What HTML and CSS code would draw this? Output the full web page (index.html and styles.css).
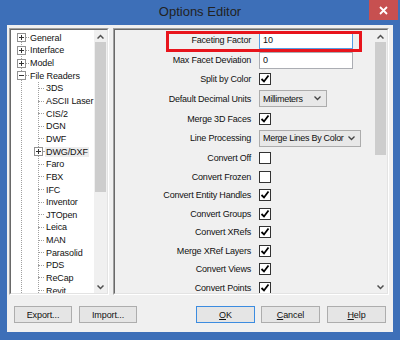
FILE: index.html
```html
<!DOCTYPE html>
<html>
<head>
<title>Options Editor</title>
<link rel="stylesheet" href="styles.css">
</head>
<body>

<div class="window">
	<div class="titlebar">
		<span class="title">Options Editor</span>
		<button class="close"><svg width="9" height="9" viewBox="0 0 9 9"><path d="M1 1 L8 8 M8 1 L1 8" stroke="#fff" stroke-width="1.8"/></svg></button>
	</div>

	<div class="client">
		<div class="panes">

			<div class="tree">
				<div class="tree-view">
					<ul class="nodes">
						<li><span class="box plus"></span><span class="dash"></span>General</li>
						<li><span class="box plus"></span><span class="dash"></span>Interface</li>
						<li><span class="box plus"></span><span class="dash"></span>Model</li>
						<li><span class="box minus"></span><span class="dash"></span>File Readers</li>
						<li class="children">
							<ul>
								<li><span class="dash long"></span>3DS</li>
								<li><span class="dash long"></span>ASCII Laser</li>
								<li><span class="dash long"></span>CIS/2</li>
								<li><span class="dash long"></span>DGN</li>
								<li><span class="dash long"></span>DWF</li>
								<li><span class="box plus inner"></span><span class="dash short"></span><span class="hot">DWG/DXF</span></li>
								<li><span class="dash long"></span>Faro</li>
								<li><span class="dash long"></span>FBX</li>
								<li><span class="dash long"></span>IFC</li>
								<li><span class="dash long"></span>Inventor</li>
								<li><span class="dash long"></span>JTOpen</li>
								<li><span class="dash long"></span>Leica</li>
								<li><span class="dash long"></span>MAN</li>
								<li><span class="dash long"></span>Parasolid</li>
								<li><span class="dash long"></span>PDS</li>
								<li><span class="dash long"></span>ReCap</li>
								<li><span class="dash long"></span>Revit</li>
							</ul>
						</li>
					</ul>
					<div class="vscroll">
						<div class="arrow"><svg width="7" height="5" viewBox="0 0 7 5"><polyline points="0.5,4.5 3.5,1.5 6.5,4.5" fill="none" stroke="#505050" stroke-width="1.5"/></svg></div>
						<div class="track"><div class="thumb tree-thumb"></div></div>
						<div class="arrow"><svg width="7" height="5" viewBox="0 0 7 5"><polyline points="0.5,0.5 3.5,3.5 6.5,0.5" fill="none" stroke="#505050" stroke-width="1.5"/></svg></div>
					</div>
				</div>
			</div>

			<div class="editor">
				<div class="editor-view">
					<div class="grid">
						<div class="row r-first">
							<label>Faceting Factor</label>
							<input class="text focus" type="text" value="10">
						</div>
						<div class="row r-input">
							<label>Max Facet Deviation</label>
							<input class="text" type="text" value="0">
						</div>
						<div class="row">
							<label>Split by Color</label>
							<span class="check on"></span>
						</div>
						<div class="row r-select">
							<label>Default Decimal Units</label>
							<span class="select units">Millimeters</span>
						</div>
						<div class="row r-short">
							<label>Merge 3D Faces</label>
							<span class="check on"></span>
						</div>
						<div class="row r-select">
							<label>Line Processing</label>
							<span class="select lines">Merge Lines By Color</span>
						</div>
						<div class="row">
							<label>Convert Off</label>
							<span class="check"></span>
						</div>
						<div class="row">
							<label>Convert Frozen</label>
							<span class="check"></span>
						</div>
						<div class="row">
							<label>Convert Entity Handles</label>
							<span class="check on"></span>
						</div>
						<div class="row">
							<label>Convert Groups</label>
							<span class="check on"></span>
						</div>
						<div class="row">
							<label>Convert XRefs</label>
							<span class="check on"></span>
						</div>
						<div class="row">
							<label>Merge XRef Layers</label>
							<span class="check on"></span>
						</div>
						<div class="row">
							<label>Convert Views</label>
							<span class="check on"></span>
						</div>
						<div class="row">
							<label>Convert Points</label>
							<span class="check on"></span>
						</div>
					</div>
					<div class="vscroll">
						<div class="arrow"><svg width="7" height="5" viewBox="0 0 7 5"><polyline points="0.5,4.5 3.5,1.5 6.5,4.5" fill="none" stroke="#505050" stroke-width="1.5"/></svg></div>
						<div class="track"><div class="thumb grid-thumb"></div></div>
						<div class="arrow"><svg width="7" height="5" viewBox="0 0 7 5"><polyline points="0.5,0.5 3.5,3.5 6.5,0.5" fill="none" stroke="#505050" stroke-width="1.5"/></svg></div>
					</div>
				</div>
				<div class="marker"></div>
			</div>

		</div>

		<div class="buttons">
			<button>Export...</button>
			<button>Import...</button>
			<button class="default push"><u>O</u>K</button>
			<button class="wide"><u>C</u>ancel</button>
			<button class="wide"><u>H</u>elp</button>
		</div>
	</div>
</div>

</body>
</html>
```

FILE: styles.css
```css
body {
	margin: 0;
	width: 400px;
	height: 340px;
	overflow: hidden;
	background-color: #3d6fb8;
	font-family: 'Liberation Sans', Arial, sans-serif;
	font-size: 9px;
	letter-spacing: -0.2px;
	color: #111;
}

ul {
	list-style: none;
	margin: 0;
	padding: 0;
}

.window {
	display: flex;
	flex-direction: column;
	height: 340px;
}

/* title bar */

.titlebar {
	display: grid;
	grid-template-columns: 1fr auto 1fr;
	height: 25px;
}

.title {
	grid-column: 2;
	font-size: 13px;
	letter-spacing: 0;
	line-height: 24px;
	color: #222;
}

.close {
	grid-column: 3;
	justify-self: end;
	display: flex;
	align-items: center;
	justify-content: center;
	width: 29px;
	height: 20px;
	margin-right: 2px;
	padding: 0;
	border: none;
	background-color: #c75050;
}

/* client area */

.client {
	display: flex;
	flex-direction: column;
	flex: 1;
	margin: 0 7px 8px;
	padding: 3px 4px 0 2px;
	background-color: #f0f0f0;
}

.panes {
	display: flex;
	gap: 4px;
	height: 267px;
}

.tree, .editor {
	box-sizing: border-box;
	border: 1px solid;
	border-color: #a0a0a0 #fff #fff #a0a0a0;
}

.tree-view, .editor-view {
	display: flex;
	height: 100%;
	box-sizing: border-box;
	border: 1px solid;
	border-color: #696969 #e3e3e3 #e3e3e3 #696969;
	overflow: hidden;
}

/* tree */

.tree {
	width: 100px;
}

.tree-view {
	background-color: #fff;
}

.nodes {
	flex: 1;
	padding-top: 1.5px;
	letter-spacing: -0.1px;
	background-image: repeating-linear-gradient(to bottom, #a0a0a0 0 1px, transparent 1px 2px);
	background-size: 1px 100%;
	background-position: 10px 6px;
	background-repeat: no-repeat;
}

.nodes li {
	display: flex;
	align-items: center;
	height: 12.65px;
	white-space: nowrap;
}

.nodes li.children {
	display: block;
	height: auto;
}

.children ul {
	background-image: repeating-linear-gradient(to bottom, #a0a0a0 0 1px, transparent 1px 2px);
	background-size: 1px 100%;
	background-position: 27px 0;
	background-repeat: no-repeat;
}

.box {
	box-sizing: border-box;
	width: 9px;
	height: 9px;
	margin-left: 6px;
	border: 1px solid #919191;
	background-color: #fff;
	background-repeat: no-repeat;
	background-position: center;
}

.box.plus {
	background-image: linear-gradient(#333, #333), linear-gradient(#333, #333);
	background-size: 5px 1px, 1px 5px;
}

.box.minus {
	background-image: linear-gradient(#333, #333);
	background-size: 5px 1px;
}

.box.inner {
	margin-left: 23px;
}

.dash {
	width: 3px;
	margin-right: 1px;
	border-top: 1px dotted #a0a0a0;
}

.dash.long {
	width: 6px;
	margin-left: 27px;
	margin-right: 2px;
}

.dash.short {
	width: 2px;
	margin-right: 1px;
}

.hot {
	padding: 0 1px;
	margin-left: -1px;
	background-color: #ededed;
}

/* scroll bars */

.vscroll {
	display: flex;
	flex-direction: column;
	width: 13px;
	background-color: #f0f0f0;
}

.arrow {
	display: flex;
	align-items: center;
	justify-content: center;
	height: 12px;
}

.track {
	flex: 1;
}

.thumb {
	margin: 0 1px;
	background-color: #cdcdcd;
}

.tree-thumb {
	height: 150px;
}

.grid-thumb {
	height: 113px;
}

/* property grid */

.editor {
	position: relative;
	flex: 1;
}

.editor-view {
	background-color: #f0f0f0;
}

.grid {
	flex: 1;
}

.row {
	display: flex;
	align-items: center;
	height: 18.5px;
}

.row.r-first {
	height: 20.5px;
}

.row.r-input {
	height: 19px;
}

.row.r-select {
	height: 21.5px;
}

.row.r-short {
	height: 18px;
}

.row label {
	width: 136px;
	margin-right: 8px;
	text-align: right;
	white-space: nowrap;
}

.text {
	box-sizing: border-box;
	width: 94px;
	height: 17px;
	margin: 0;
	padding: 0 3px;
	border: 1px solid #abadb3;
	background-color: #fff;
	font-family: inherit;
	font-size: 9px;
	color: #111;
	outline: none;
}

.text.focus {
	border-color: #569de5;
}

.check {
	box-sizing: border-box;
	width: 12px;
	height: 12px;
	border: 1px solid #333;
	background-color: #fff;
}

.check.on {
	background-image: url("data:image/svg+xml,%3Csvg xmlns='http://www.w3.org/2000/svg' width='10' height='10'%3E%3Cpolyline points='1.5,5 4,7.5 8.5,1.5' fill='none' stroke='%23000' stroke-width='1.8'/%3E%3C/svg%3E");
	background-repeat: no-repeat;
	background-position: center;
}

.select {
	box-sizing: border-box;
	display: flex;
	align-items: center;
	height: 17px;
	padding: 0 3px;
	border: 1px solid #acacac;
	background-color: #e8e8e8;
	background-image: url("data:image/svg+xml,%3Csvg xmlns='http://www.w3.org/2000/svg' width='7' height='5'%3E%3Cpolyline points='0.5,0.5 3.5,3.5 6.5,0.5' fill='none' stroke='%23444' stroke-width='1.3'/%3E%3C/svg%3E");
	background-repeat: no-repeat;
	background-position: right 5px center;
	white-space: nowrap;
	letter-spacing: -0.3px;
}

.select.units {
	width: 68px;
}

.select.lines {
	width: 102px;
}

/* annotation drawn over the first row */

.marker {
	position: absolute;
	left: 52px;
	top: 2px;
	width: 196px;
	height: 21px;
	box-sizing: border-box;
	border: 3px solid #e8141c;
}

/* dialog buttons */

.buttons {
	display: flex;
	gap: 7px;
	margin-top: 11px;
	padding: 0 3px 0 5px;
}

.buttons button {
	box-sizing: border-box;
	width: 58px;
	height: 17px;
	padding: 0;
	border: 1px solid #adadad;
	background-color: #e5e5e5;
	font-family: inherit;
	font-size: 9px;
	letter-spacing: -0.1px;
	color: #111;
}

.buttons button.push {
	width: 59px;
	margin-left: auto;
	margin-right: -1px;
}

.buttons button.wide {
	width: 59px;
}

.buttons button.default {
	border-color: #3c8ce0;
}
```
